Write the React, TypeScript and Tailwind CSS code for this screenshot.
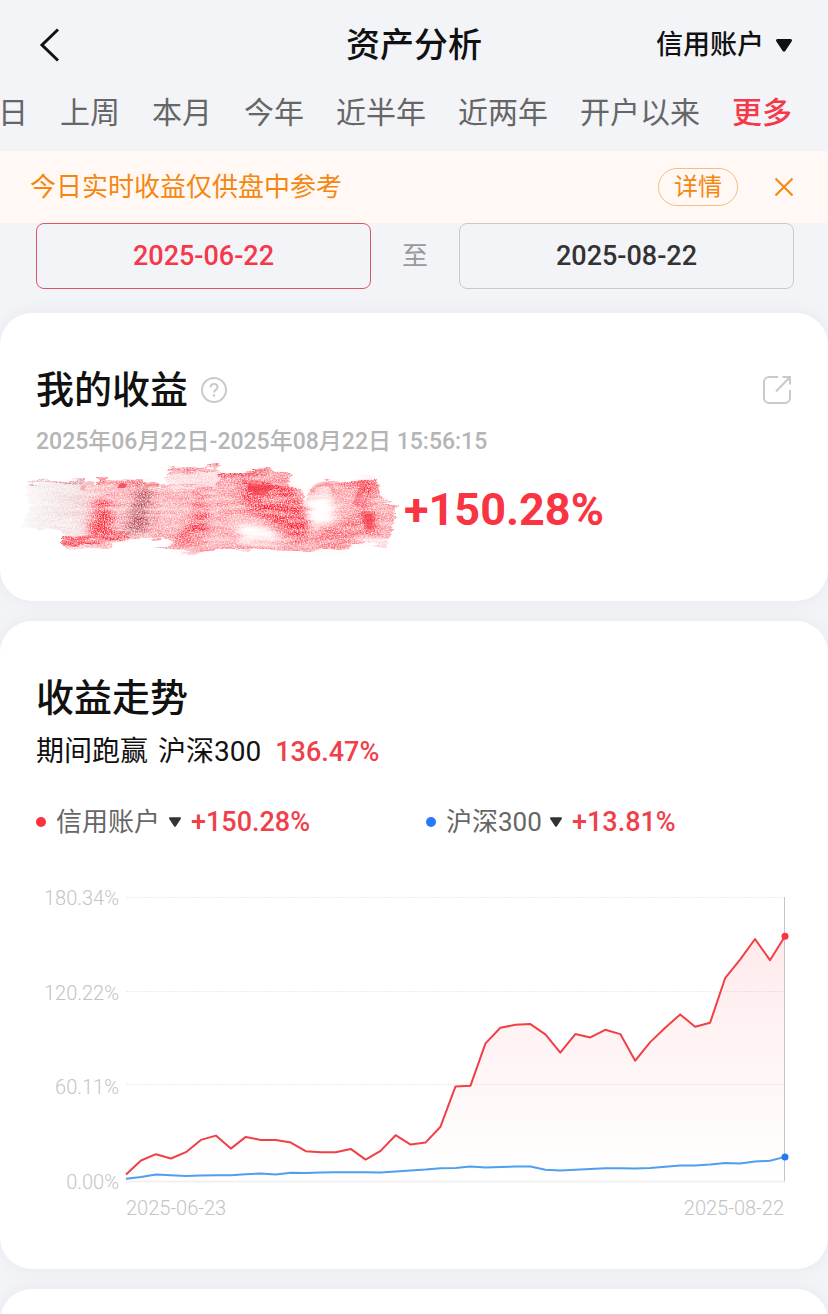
import React from 'react';

const accountReturns = [
  4.1, 13.0, 17.0, 14.3, 18.3, 26.1, 28.8, 20.6, 28.0, 26.1, 26.1, 24.4, 18.9, 18.3, 18.3,
  20.4, 13.6, 19.1, 29.1, 23.1, 24.4, 34.5, 60.1, 60.5, 87.4, 97.3, 99.2, 99.6, 93.1, 81.5,
  93.3, 91.2, 96.0, 93.3, 76.4, 88.2, 97.3, 105.8, 97.9, 100.5, 128.8, 140.6, 153.7, 140.2, 155.4,
];

const indexReturns = [
  1.4, 2.6, 4.1, 3.7, 3.1, 3.5, 3.7, 3.7, 4.3, 4.8, 4.1, 5.2, 5.0, 5.4, 5.6,
  5.6, 5.6, 5.4, 6.0, 6.7, 7.3, 8.1, 8.3, 9.2, 8.6, 8.8, 9.2, 9.2, 7.1, 6.7,
  7.1, 7.7, 8.1, 8.1, 7.9, 8.3, 9.0, 9.8, 9.8, 10.5, 11.5, 11.1, 12.4, 12.8, 15.3,
];

const tabs = ['日', '上周', '本月', '今年', '近半年', '近两年', '开户以来', '更多'];
const axisLabels = ['180.34%', '120.22%', '60.11%', '0.00%'];

const CHART_RIGHT = 659;
const CHART_BOTTOM = 295;
const CHART_HEIGHT = 284;
const MAX_VALUE = 180.34;

const toX = (i: number) => (i * CHART_RIGHT) / (accountReturns.length - 1);
const toY = (value: number) => CHART_BOTTOM - (value / MAX_VALUE) * CHART_HEIGHT;
const toPoints = (values: number[]) =>
  values.map((v, i) => `${toX(i).toFixed(1)},${toY(v).toFixed(1)}`).join(' ');

const Triangle: React.FC<{ className: string }> = ({ className }) => (
  <svg viewBox="0 0 16 13" className={className} fill="currentColor" aria-hidden="true">
    <path d="M1.6 0h12.8c1.3 0 2 1.4 1.2 2.4L9.3 12.1c-.7.9-1.9.9-2.6 0L.4 2.4C-.4 1.4 .3 0 1.6 0Z" />
  </svg>
);

/* Crayon scribble that hides the profit amount */
const Scribble: React.FC = () => (
  <svg viewBox="0 0 384 96" className="w-[384px] h-24 shrink-0" aria-hidden="true">
    <defs>
      <filter id="crayon" x="0" y="0" width="384" height="96" filterUnits="userSpaceOnUse" colorInterpolationFilters="sRGB">
        <feTurbulence type="fractalNoise" baseFrequency="0.03 0.2" numOctaves="3" seed="4" result="streak" />
        <feDisplacementMap in="SourceGraphic" in2="streak" scale="12" xChannelSelector="R" yChannelSelector="G" result="rough" />
        <feColorMatrix in="streak" type="matrix" values="0 0 0 0 0  0 0 0 0 0  0 0 0 0 0  0 0 0 -1.2 1.45" result="bands" />
        <feComposite in="rough" in2="bands" operator="in" result="banded" />
        <feTurbulence type="fractalNoise" baseFrequency="0.7 0.8" numOctaves="3" seed="9" result="grain" />
        <feColorMatrix in="grain" type="matrix" values="0 0 0 0 0  0 0 0 0 0  0 0 0 0 0  0 0 0 -1.8 1.6" result="mask" />
        <feComposite in="banded" in2="mask" operator="in" />
      </filter>
      <filter id="blotch" x="-30%" y="-30%" width="160%" height="160%">
        <feGaussianBlur stdDeviation="4" />
      </filter>
      <linearGradient id="fadeIn" x1="0" x2="1">
        <stop offset="0" stopColor="#c9a9ab" stopOpacity="0.1" />
        <stop offset="0.35" stopColor="#dba4a8" stopOpacity="0.5" />
        <stop offset="0.55" stopColor="#f8808a" stopOpacity="0.75" />
        <stop offset="1" stopColor="#f8707b" stopOpacity="0.75" />
      </linearGradient>
    </defs>
    <g filter="url(#crayon)">
      <path d="M4 20 62 17 66 24 98 20 138 22 142 76 48 84 42 68 0 66 10 48Z" fill="url(#fadeIn)" />
      <path d="M6 20 64 16 64 20 8 24Z" fill="#dd9298" />
      <path d="M78 18 124 19 120 25 80 25Z" fill="#fa6873" />
      <path d="M136 24 182 18 200 22 200 86 158 85 146 74 132 76Z" fill="#f97d87" fillOpacity="0.8" />
      <path d="M146 8 198 3 200 8 154 14 146 12Z" fill="#f26c79" />
      <path d="M148 14 200 8 202 24 150 24Z" fill="#fccdd1" />
      <path d="M198 14 252 6 254 11 270 12 268 24 284 28 286 40 288 86 200 86Z" fill="#fa6a76" fillOpacity="0.8" />
      <path d="M198 14 251 6 254 12 202 17Z" fill="#ee3e4d" />
      <path d="M290 28 304 20 360 19 358 28 362 38 378 42 374 58 370 78 322 86 264 88 284 66Z" fill="#fa707b" fillOpacity="0.8" />
      <path d="M306 19 360 19 354 27 306 25Z" fill="#f9606c" />
      <path d="M42 75 110 68 108 77 42 83Z" fill="#f93b4a" />
      <path d="M42 84 94 80 90 86 42 88Z" fill="#fbb0b6" />
      <path d="M136 85 180 82 200 84 180 89 138 88Z" fill="#fa98a0" />
      <path d="M216 84 330 79 322 86 264 89 214 87Z" fill="#f98089" />
      <path d="M342 78 368 76 366 86Z" fill="#fcc3c8" />
      <path d="M222 61 250 64 262 78 218 80Z" fill="#fff" filter="url(#blotch)" />
      <path d="M284 40 310 26 316 62 286 66Z" fill="#fff" filter="url(#blotch)" />
      <g filter="url(#blotch)">
        <path d="M78 36 93 34 92 76 66 80Z" fill="#fb2233" />
        <path d="M114 30 132 24 126 70 104 72Z" fill="#b53c4a" />
        <path d="M174 30 186 28 188 84 156 84 160 66 172 60Z" fill="#fb2637" />
        <path d="M224 16 256 14 276 30 288 56 284 80 264 72 250 58 222 48Z" fill="#fb1a2d" />
        <path d="M338 22 354 22 348 44 358 52 356 72 340 70Z" fill="#fa1a2d" />
        <path d="M290 72 340 48 340 78 300 84Z" fill="#fb4350" fillOpacity="0.7" />
      </g>
    </g>
    <path d="M99 23c1-2 3-2 8-1l-2 4-8 0Z" fill="#f43e4c" fillOpacity="0.8" />
    <path d="M228 22v8h4v-3c1 5 5 7 10 6 6-1 9-5 11-10" fill="#f23445" fillOpacity="0.7" />
    <path d="M62 28c2-7 7-8 12-6M124 28c4-7 9-8 15-4M292 30c2-10 20-12 22 1" fill="none" stroke="#f8707b" strokeOpacity="0.45" strokeWidth="4" />
    <path d="M344 22l-9 21M344 52h8v15h-4z" fill="#f43746" fillOpacity="0.5" stroke="#f43746" strokeOpacity="0.35" strokeWidth="6" />
  </svg>
);

const Chart: React.FC = () => {
  const last = accountReturns.length - 1;
  return (
    <div className="mt-[46px] flex">
      <div className="w-[83px] mr-[7px] shrink-0 flex flex-col justify-between text-right text-xl leading-6 font-light text-[#c4c4c6]">
        {axisLabels.map((label) => (
          <span key={label}>{label}</span>
        ))}
      </div>
      <svg viewBox="0 0 666 308" className="w-full min-w-0 h-auto overflow-visible" role="img" aria-label="收益走势图">
        <defs>
          <linearGradient id="area" x1="0" x2="0" y1="0" y2="1">
            <stop offset="0" stopColor="#f8323e" stopOpacity="0.1" />
            <stop offset="1" stopColor="#f8323e" stopOpacity="0" />
          </linearGradient>
        </defs>
        {[11, 105, 198].map((y) => (
          <line key={y} x1="0" x2="658" y1={y + 0.5} y2={y + 0.5} stroke="#ededef" strokeDasharray="2 1" />
        ))}
        <line x1="0" x2="659" y1="295.5" y2="295.5" stroke="#f1f1f3" strokeWidth="2" />
        <polygon points={`0,${CHART_BOTTOM} ${toPoints(accountReturns)} ${CHART_RIGHT},${CHART_BOTTOM}`} fill="url(#area)" />
        <line x1="658.5" x2="658.5" y1="11" y2="295" stroke="#c4c4c8" />
        <polyline points={toPoints(indexReturns)} fill="none" stroke="#4e9fee" strokeWidth="2" strokeLinejoin="round" />
        <polyline points={toPoints(accountReturns)} fill="none" stroke="#f04046" strokeWidth="2" strokeLinejoin="round" />
        <circle cx={CHART_RIGHT} cy={toY(accountReturns[last])} r="3.5" fill="#f9323e" />
        <circle cx={CHART_RIGHT} cy={toY(indexReturns[last])} r="3.5" fill="#2678f0" />
      </svg>
    </div>
  );
};

const Legend: React.FC<{ name: string; value: string; dot: string }> = ({ name, value, dot }) => (
  <div className="flex items-center">
    <span className={`w-[10px] h-[10px] rounded-full ${dot}`}></span>
    <label className="ml-[10px] flex items-center gap-2">
      <select aria-label={name} className="appearance-none bg-transparent text-[26px] leading-9 text-[#666]">
        <option>{name}</option>
      </select>
      <Triangle className="w-3 h-[10px] text-[#333]" />
    </label>
    <span className="ml-[10px] text-[27px] leading-9 font-medium text-[#f0404b]">{value}</span>
  </div>
);

const App: React.FC = () => {
  return (
    <div className="min-h-screen overflow-hidden bg-[#f3f4f8] font-['Roboto','Noto_Sans_CJK_SC',sans-serif] text-[#111]">
      <header className="grid grid-cols-[1fr_auto_1fr] items-center h-[90px] px-9">
        <button aria-label="返回" className="w-8 h-10 flex items-center">
          <svg viewBox="0 0 28 40" className="w-7 h-10" fill="none" stroke="#111" strokeWidth="3">
            <path d="M22 4.5 6 20l16 15.5" />
          </svg>
        </button>
        <h1 className="text-[34px] leading-10 font-medium">资产分析</h1>
        <label className="justify-self-end flex items-center gap-3">
          <select aria-label="账户" className="appearance-none bg-transparent text-[27px] leading-9 font-medium">
            <option>信用账户</option>
          </select>
          <Triangle className="w-4 h-[13px]" />
        </label>
      </header>

      <nav className="flex justify-end gap-8 pr-9 pb-[15px] text-[30px] leading-[46px] text-[#666]">
        {tabs.map((tab) => (
          <button
            key={tab}
            className={tab === '更多' ? 'shrink-0 font-medium text-[#f5384a]' : 'shrink-0'}
          >
            {tab}
          </button>
        ))}
      </nav>

      <div className="flex items-center h-[72px] pl-[30px] pr-[34px] bg-[#fff8f5] text-[#f5870f]">
        <p className="grow text-[26px] leading-9">今日实时收益仅供盘中参考</p>
        <button className="w-20 h-[38px] rounded-full border border-[#f7bd80] text-2xl leading-8">详情</button>
        <button aria-label="关闭" className="ml-9">
          <svg viewBox="0 0 20 20" className="w-5 h-5" fill="none" stroke="currentColor" strokeWidth="2">
            <path d="M1.5 1.5l17 17M18.5 1.5l-17 17" />
          </svg>
        </button>
      </div>

      <div className="flex items-center pl-9 pr-[34px] text-[27px] font-medium">
        <button className="flex-1 h-[66px] rounded-lg border border-[#dd5561] text-[#f5384a]">2025-06-22</button>
        <span className="w-[88px] text-center text-[26px] font-normal text-[#999]">至</span>
        <button className="flex-1 h-[66px] rounded-lg border border-[#c8c9cd] text-[#333]">2025-08-22</button>
      </div>

      <main className="mt-6 flex flex-col gap-5">
        <section className="h-72 px-9 pt-[53px] rounded-[32px] bg-white shadow-[0_0_20px_rgba(30,30,60,0.05)]">
          <div className="flex items-center">
            <h2 className="text-[38px] leading-12 font-medium">我的收益</h2>
            <button aria-label="收益说明" className="ml-3">
              <svg viewBox="0 0 28 28" className="w-7 h-7" fill="none" stroke="#cacaca" strokeWidth="2">
                <circle cx="14" cy="14" r="12" />
                <path d="M10.5 11.5c0-2 1.5-3.5 3.5-3.5s3.5 1.4 3.5 3.3c0 2.4-3.5 2.7-3.5 5.2" />
                <circle cx="14" cy="19.5" r="1.3" fill="#cacaca" stroke="none" />
              </svg>
            </button>
            <button aria-label="分享" className="ml-auto">
              <svg viewBox="0 0 30 30" className="w-[30px] h-[30px]" fill="none" stroke="#cacaca" strokeWidth="2">
                <path d="M16 2H7a5 5 0 0 0-5 5v16a5 5 0 0 0 5 5h16a5 5 0 0 0 5-5v-8" />
                <path d="M20.5 2H28v7.5M28 2 14 16.5" />
              </svg>
            </button>
          </div>
          <p className="mt-[10px] text-[23px] leading-9 font-medium text-[#b5b5b5]">
            2025年06月22日-2025年08月22日 15:56:15
          </p>
          <div className="mt-0.5 -ml-4 flex items-center">
            <Scribble />
            <span className="text-[45px] leading-12 font-bold text-[#f93544]">+150.28%</span>
          </div>
        </section>

        <section className="px-9 pt-[53px] pb-[49px] rounded-[32px] bg-white shadow-[0_0_20px_rgba(30,30,60,0.05)]">
          <h2 className="text-[38px] leading-12 font-medium">收益走势</h2>
          <p className="mt-3 flex items-center text-[28px] leading-9">
            <span>期间跑赢</span>
            <span className="ml-[10px]">沪深300</span>
            <span className="ml-[14px] text-[27px] font-medium text-[#f0404b]">136.47%</span>
          </p>
          <div className="mt-[34px] grid grid-cols-[390px_1fr]">
            <Legend name="信用账户" value="+150.28%" dot="bg-[#f9323e]" />
            <Legend name="沪深300" value="+13.81%" dot="bg-[#2678ff]" />
          </div>
          <Chart />
          <div className="ml-[90px] mr-2 mt-0.5 flex justify-between text-xl leading-6 font-light text-[#c4c4c6]">
            <span>2025-06-23</span>
            <span>2025-08-22</span>
          </div>
        </section>

        <section className="h-20 -mb-14 rounded-t-[32px] bg-white shadow-[0_0_20px_rgba(30,30,60,0.05)]"></section>
      </main>
    </div>
  );
};

export default App;
